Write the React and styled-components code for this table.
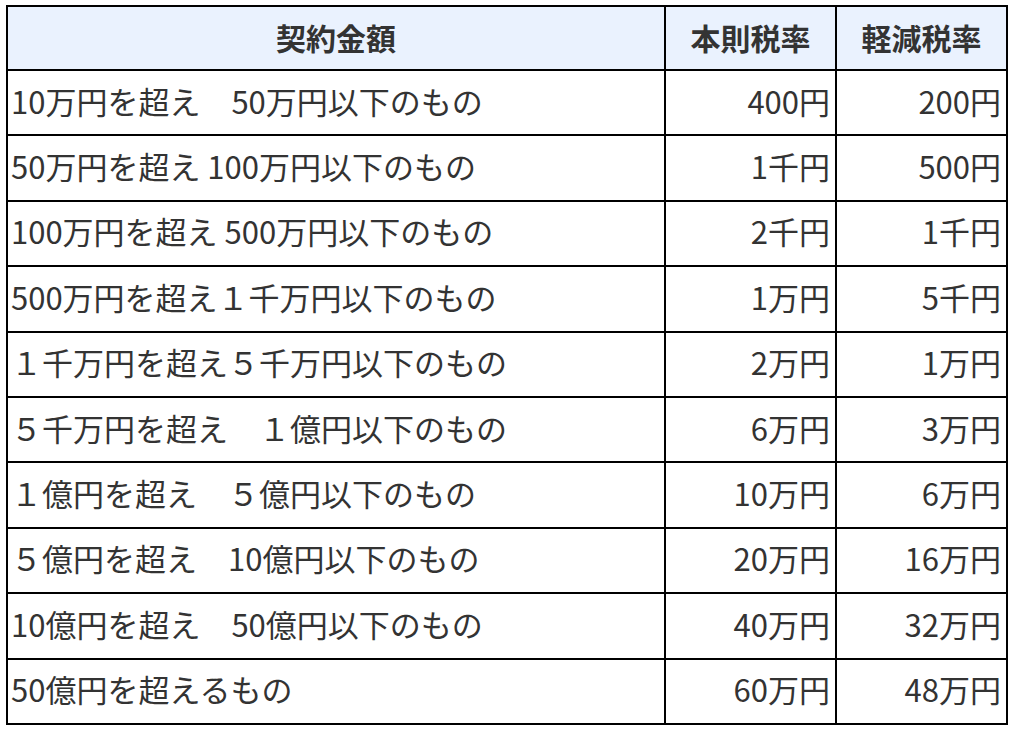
import React from "react";
import styled, { createGlobalStyle } from "styled-components";

const GlobalStyle = createGlobalStyle`
  html, body {
    margin: 0;
    padding: 0;
    background: #ffffff;
  }
  body {
    font-family: "Noto Sans CJK JP", "Noto Sans", sans-serif;
    color: #333333;
  }
`;

const rows = [
  ["10万円を超え　50万円以下のもの", "400円", "200円"],
  ["50万円を超え 100万円以下のもの", "1千円", "500円"],
  ["100万円を超え 500万円以下のもの", "2千円", "1千円"],
  ["500万円を超え１千万円以下のもの", "1万円", "5千円"],
  ["１千万円を超え５千万円以下のもの", "2万円", "1万円"],
  ["５千万円を超え　１億円以下のもの", "6万円", "3万円"],
  ["１億円を超え　５億円以下のもの", "10万円", "6万円"],
  ["５億円を超え　10億円以下のもの", "20万円", "16万円"],
  ["10億円を超え　50億円以下のもの", "40万円", "32万円"],
  ["50億円を超えるもの", "60万円", "48万円"],
];

export default function App() {
  return (
    <>
      <GlobalStyle />
      <Wrap>
        <Table>
          <colgroup>
            <col style={{ width: 658 }} />
            <col style={{ width: 171 }} />
            <col style={{ width: 171 }} />
          </colgroup>
          <thead>
            <tr>
              <Th>契約金額</Th>
              <Th>本則税率</Th>
              <Th>軽減税率</Th>
            </tr>
          </thead>
          <tbody>
            {rows.map((r) => (
              <tr key={r[0]}>
                <Td>{r[0]}</Td>
                <Td $num>{r[1]}</Td>
                <Td $num>{r[2]}</Td>
              </tr>
            ))}
          </tbody>
        </Table>
      </Wrap>
    </>
  );
}

const Wrap = styled.div`
  padding: 5px 6px;
`;

const Table = styled.table`
  width: 1002px;
  border-collapse: collapse;
  table-layout: fixed;
  border: 2px solid #000;
`;

const Th = styled.th`
  height: 60px;
  padding: 0 6px 2px;
  border: 2px solid #000;
  background: #eaf2fe;
  font-size: 30px;
  font-weight: 700;
  color: #333;
  text-align: center;
  white-space: nowrap;
`;

const Td = styled.td`
  height: 59.4px;
  padding: 0 ${(p) => (p.$num ? "5px" : "3px")} 4px;
  border: 2px solid #000;
  font-size: 31px;
  font-weight: 400;
  color: #333;
  text-align: ${(p) => (p.$num ? "right" : "left")};
  white-space: nowrap;
  line-height: 34px;
`;
